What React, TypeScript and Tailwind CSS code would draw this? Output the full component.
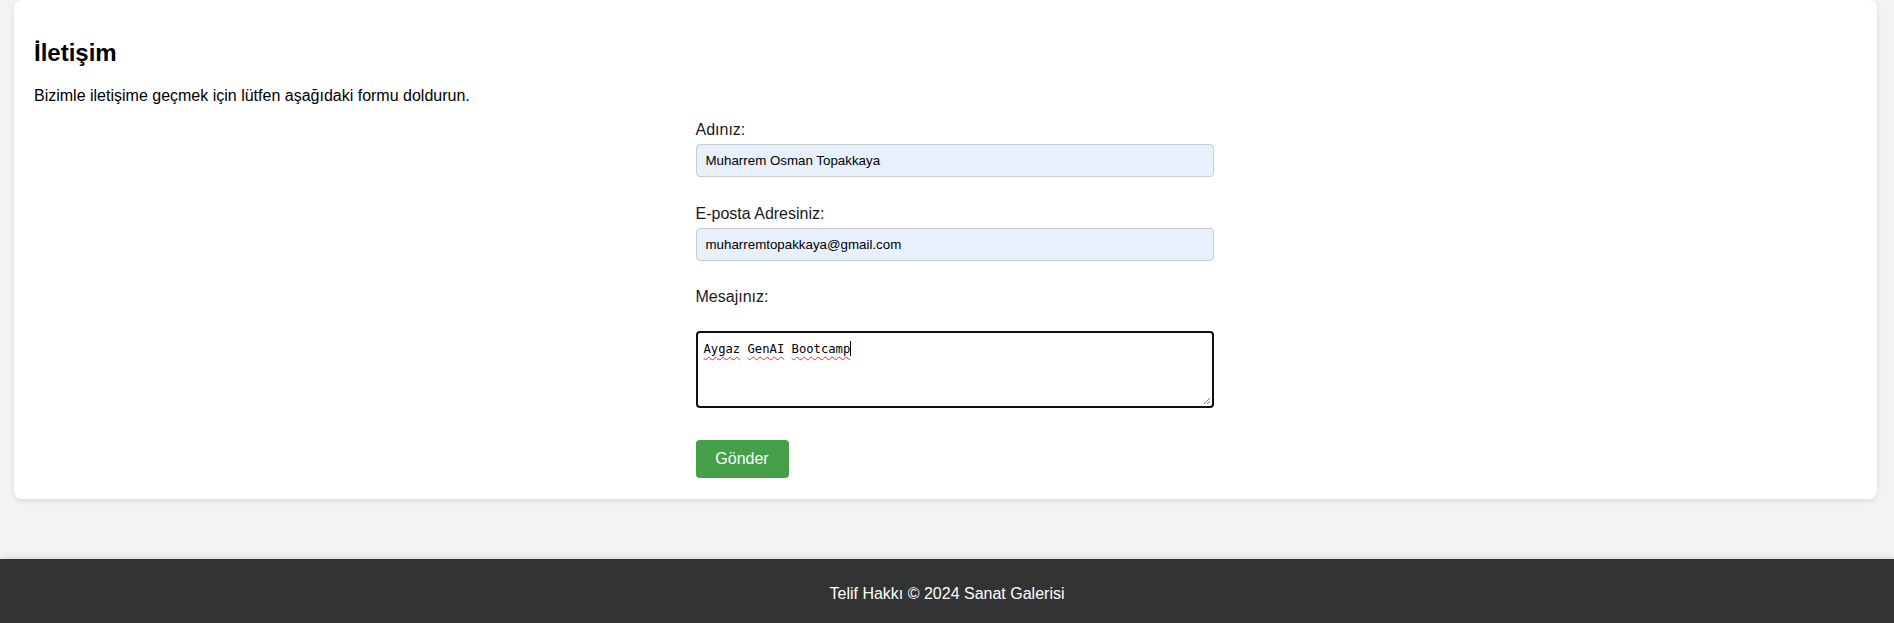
export default function App() {
  return (
    <div className="min-h-screen bg-[#f2f3f5] font-['Liberation_Sans',Arial,sans-serif] text-black flex flex-col">
      <main className="ml-[14px] mr-[17px]">
        <section className="bg-white rounded-[8px] shadow-[0_2px_5px_rgba(0,0,0,0.1)] px-[20px] pt-[20px] pb-[21px]">
          <h2 className="mt-[19px] text-[24px] leading-[28px] font-bold">İletişim</h2>
          <p className="mt-[20px] text-[16px] leading-[18px]">
            Bizimle iletişime geçmek için lütfen aşağıdaki formu doldurun.
          </p>

          <form className="mt-[16px] w-[500px] mx-auto" onSubmit={(e) => e.preventDefault()}>
            <label className="block text-[16px] leading-[18px] text-[#1a1a1a]">Adınız:</label>
            <input
              type="text"
              defaultValue="Muharrem Osman Topakkaya"
              className="mt-[5px] block w-[518px] h-[33px] px-[9px] text-[13.33px] border border-[#c9ccd1] rounded-[4px] bg-[#e8f0fe] outline-none"
            />

            <label className="mt-[28px] block text-[16px] leading-[18px] text-[#1a1a1a]">E-posta Adresiniz:</label>
            <input
              type="email"
              defaultValue="muharremtopakkaya@gmail.com"
              className="mt-[5px] block w-[518px] h-[33px] px-[9px] text-[13.33px] border border-[#c9ccd1] rounded-[4px] bg-[#e8f0fe] outline-none"
            />

            <label className="mt-[27px] block text-[16px] leading-[18px] text-[#1a1a1a]">Mesajınız:</label>
            <div className="relative mt-[25px] w-[518px] h-[77px] border-2 border-[#111] rounded-[4px] bg-white pl-[6px] pt-[8px] font-['DejaVu_Sans_Mono',monospace] text-[12.2px] leading-[14px]">
              <span className="underline decoration-wavy decoration-[#e03030] decoration-1 underline-offset-[3px]">Aygaz</span>{' '}
              <span className="underline decoration-wavy decoration-[#e03030] decoration-1 underline-offset-[3px]">GenAI</span>{' '}
              <span className="underline decoration-wavy decoration-[#e03030] decoration-1 underline-offset-[3px]">Bootcamp</span>
              <span className="inline-block w-px h-[15px] bg-black align-[-3px]" />
              <svg className="absolute right-[1px] bottom-[1px]" width="9" height="9" viewBox="0 0 9 9">
                <path d="M8 2L2 8M8 5L5 8" stroke="#888" strokeWidth="1" />
              </svg>
            </div>

            <button
              type="submit"
              className="mt-[32px] h-[38px] w-[93px] bg-[#45a049] text-white text-[16px] rounded-[4px]"
            >
              Gönder
            </button>
          </form>
        </section>
      </main>

      <footer className="mt-[60px] bg-[#333] text-white text-center text-[16px] leading-[18px] pt-[26px] pb-[25px] shadow-[0_-2px_6px_rgba(0,0,0,0.1)]">
        Telif Hakkı © 2024 Sanat Galerisi
      </footer>
    </div>
  );
}
